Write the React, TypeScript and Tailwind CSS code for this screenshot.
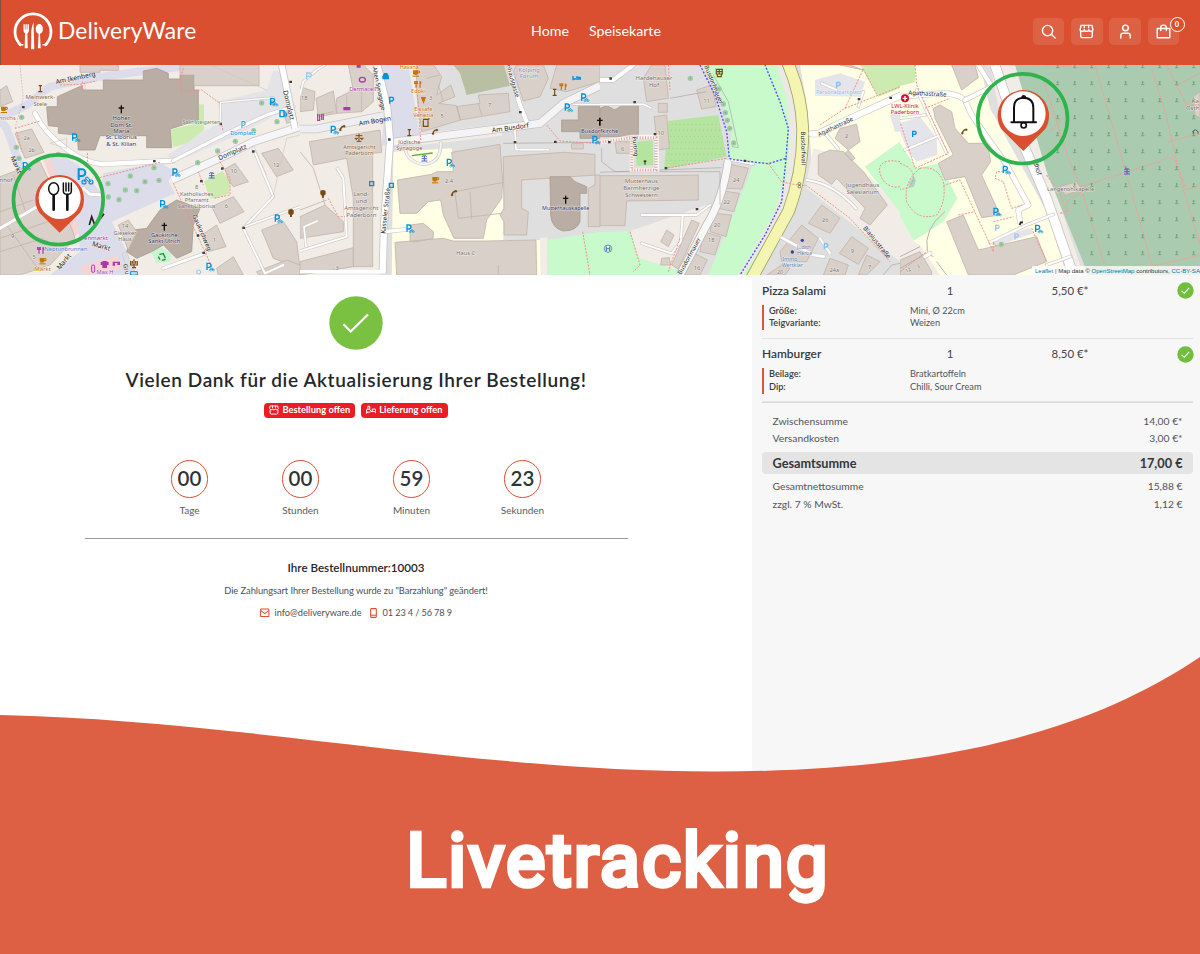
import React from 'react';

type Label = {
  x: number;
  y: number;
  t: string;
  c?: string;
  s?: number;
  r?: number;
  o?: number;
};

const NAVY = '#33335f';
const GREY = '#77706b';
const BLUE = '#0092da';
const ORANGE = '#c77400';
const PURPLE = '#ac39ac';

/* Every map tile is drawn on its own 900 x 630 grid. */
function Tile({ i, children }: { i: number; children: React.ReactNode }) {
  return (
    <svg x={i * 900} y={0} width={900} height={630} viewBox="0 0 900 630">
      {children}
    </svg>
  );
}

function Buildings({ d, dark }: { d: string; dark?: boolean }) {
  return <path d={d} fill={dark ? '#b9ada4' : '#d9d0c9'} stroke={dark ? '#a99c92' : '#c3b5ab'} strokeWidth={2.5} />;
}

function Area({ d, c }: { d: string; c: string }) {
  return <path d={d} fill={c} />;
}

function Road({ d, w = 14, c = '#ffffff', edge = '#cfcac8' }: { d: string; w?: number; c?: string; edge?: string }) {
  return (
    <g fill="none" strokeLinecap="round" strokeLinejoin="round">
      <path d={d} stroke={edge} strokeWidth={w + 4} />
      <path d={d} stroke={c} strokeWidth={w} />
    </g>
  );
}

function Foot({ d, c = '#f0908a', w = 3 }: { d: string; c?: string; w?: number }) {
  return <path d={d} fill="none" stroke={c} strokeWidth={w} strokeDasharray="6 4" />;
}

function Trees({ pts }: { pts: number[][] }) {
  return (
    <g fill="#9fcaa5">
      {pts.map(([x, y]) => (
        <g key={`${x}-${y}`}>
          <circle cx={x} cy={y} r={8} />
          <circle cx={x} cy={y} r={2.5} fill="#7fae86" />
        </g>
      ))}
    </g>
  );
}

function Gates({ pts }: { pts: number[][] }) {
  return (
    <g fill="#3f3f3f">
      {pts.map(([x, y]) => (
        <rect key={`${x}-${y}`} x={x - 4} y={y - 4} width={8} height={7} rx={1} />
      ))}
    </g>
  );
}

function Labels({ items }: { items: Label[] }) {
  return (
    <g fontFamily="'Noto Sans', 'Open Sans', sans-serif" textAnchor="middle">
      {items.map((l, i) => (
        <text
          key={i}
          x={l.x}
          y={l.y}
          fontSize={l.s ?? 20}
          fill={l.c ?? '#222222'}
          opacity={l.o ?? 1}
          stroke="#ffffff"
          strokeOpacity={0.55}
          strokeWidth={3}
          paintOrder="stroke"
          transform={l.r ? `rotate(${l.r} ${l.x} ${l.y})` : undefined}
        >
          {l.t}
        </text>
      ))}
    </g>
  );
}

function Cross({ x, y }: { x: number; y: number }) {
  return <path d={`M${x} ${y - 12}V${y + 12}M${x - 8} ${y - 4}H${x + 8}`} stroke="#111" strokeWidth={4} fill="none" />;
}

function BikeParking({ x, y, k = 1, o = 1 }: { x: number; y: number; k?: number; o?: number }) {
  return (
    <g transform={`translate(${x} ${y}) scale(${k})`} stroke={BLUE} fill="none" opacity={o}>
      <path d="M-8 10V-10H-2A5.500 5.500 0 0 1 -2 2H-8" strokeWidth={4} />
      <circle cx={2} cy={10} r={3} strokeWidth={1.800} />
      <circle cx={11} cy={10} r={3} strokeWidth={1.800} />
      <path d="M2 10L5 4H8L11 10M4 5L8 10" strokeWidth={1.800} />
    </g>
  );
}

function Cup({ x, y }: { x: number; y: number }) {
  return (
    <g fill={ORANGE}>
      <path d={`M${x - 9} ${y - 9}H${x + 6}V${y}Q${x + 5} ${y + 5} ${x - 1} ${y + 5}Q${x - 9} ${y + 5} ${x - 9} ${y}Z`} />
      <path d={`M${x + 5} ${y - 7}H${x + 10}V${y - 1}H${x + 5}`} fill="none" stroke={ORANGE} strokeWidth={3} />
      <rect x={x - 10} y={y + 7} width={19} height={3} />
    </g>
  );
}

function Cutlery({ x, y, c = ORANGE }: { x: number; y: number; c?: string }) {
  return (
    <path
      d={`M${x - 6} ${y + 10}V${y - 10}M${x - 10} ${y - 10}V${y - 3}H${x - 2}V${y - 10}M${x + 6} ${y + 10}V${y - 9}M${x + 8} ${y - 9}V${y}`}
      stroke={c}
      strokeWidth={3.500}
      fill="none"
    />
  );
}

function Phone({ x, y }: { x: number; y: number }) {
  return (
    <g fill="#7b4a12" stroke="#7b4a12">
      <path d={`M${x - 6} ${y + 7}Q${x - 5} ${y - 4} ${x + 6} ${y - 6}`} fill="none" strokeWidth={4} />
      <circle cx={x - 6} cy={y + 6} r={3} />
      <circle cx={x + 6} cy={y - 5} r={3} />
    </g>
  );
}

function Fountain({ x, y }: { x: number; y: number }) {
  return (
    <path
      d={`M${x - 9} ${y + 9}H${x + 9}M${x - 8} ${y + 2}H${x + 8}M${x} ${y + 9}V${y - 8}M${x - 7} ${y - 3}Q${x - 5} ${y - 10} ${x} ${y - 5}Q${x + 5} ${y - 10} ${x + 7} ${y - 3}`}
      stroke="#4a5fd0"
      strokeWidth={3}
      fill="none"
    />
  );
}

function Statue({ x, y }: { x: number; y: number }) {
  return <path d={`M${x} ${y + 9}V${y - 9}M${x - 6} ${y + 9}H${x + 6}M${x - 5} ${y - 9}H${x + 5}`} stroke="#7b4a12" strokeWidth={3.500} fill="none" />;
}

const tileOneTrees = [
  [65, 157], [49, 247], [57, 280], [175, 268], [785, 114], [816, 114], [831, 170], [761, 197], [706, 229],
  [653, 258], [593, 293], [462, 308], [477, 346], [435, 350], [391, 333], [376, 375], [410, 377], [357, 404],
  [325, 396], [324, 356],
];

function TileOne() {
  return (
    <Tile i={0}>
      <rect width={900} height={630} fill="#f1ece6" />
      <Area c="#e3e3e8" d="M600 205L660 175L655 110L800 75L820 18L850 20L870 130L700 215L530 290L500 272L600 205Z" />
      <Area c="#dcdcea" d="M130 280L170 262L235 300L300 380L310 325L480 292L525 320L505 348L525 385L335 470L380 560V630H150L240 560L235 490L150 330Z" />
      <path d="M0 160L80 120L150 65L270 40L430 18L560 4" stroke="#dcdcea" strokeWidth={24} fill="none" />
      <path d="M0 165L20 190L70 330" stroke="#dcdcea" strokeWidth={24} fill="none" />
      <Area c="#cdebb0" d="M597 118H612V195L560 235L520 247L508 195L590 175Z" />
      <Area c="#cdebb0" d="M612 348L668 318L690 350L688 385L645 400L628 398Z" />
      <Area c="#c8f5d0" d="M453 560L480 545L515 565L510 590L470 595Z" />
      <Area c="#f5d5d3" d="M130 285L150 275L240 500L220 520ZM60 520L90 510L95 560L60 555ZM240 605L350 570L365 610L250 630Z" />
      <Buildings dark d="M140 125H172V95L245 62L250 75H310V45H430V18L470 10L505 25V42H540V30H582V75H595V165L510 192L515 248H440V212H300L285 255H235L232 210L175 205V185L145 182Z" />
      <Buildings dark d="M380 560L400 495L440 490L480 435L530 405L600 430L580 480L575 560L530 580L490 540L455 560L410 580Z" />
      <Buildings d="M555 0H777V62H582V30H540V0ZM240 0H355V16H300V22H240ZM0 75L20 62L38 110L0 125ZM45 205L95 192L132 262L75 280ZM675 312L705 295L745 350L700 365L685 345ZM785 265L835 250L880 315L830 335ZM635 425L700 395L732 440L660 475ZM605 510L650 480L678 545L625 560ZM785 495L850 470L890 530L900 610L820 580ZM650 610L700 575L730 630H655Z" />
      <Buildings d="M0 335L120 290L215 490L225 520L150 600L60 630H0ZM355 480L385 465L410 500L385 555ZM850 140L880 130L890 165L860 175ZM770 620L860 585L900 600V630H775Z" />
      <path d="M0 440L100 405M0 520L200 450M0 560L130 520M40 330L80 450M20 480L120 620" stroke="#c3b5ab" strokeWidth={2.500} fill="none" />
      <Road d="M105 145C135 210 235 300 320 297L520 287" w={13} />
      <Road d="M0 490L120 420" w={8} />
      <Road d="M520 287L690 200L800 150L880 125" w={9} />
      <path d="M515 345L690 265L760 230L900 185" stroke="#c9c5c4" strokeWidth={26} fill="none" />
      <path d="M515 345L690 265L760 230L900 185" stroke="#f6f6f8" strokeWidth={21} fill="none" />
      <path d="M845 0L860 70L885 190" stroke="#c9c5c4" strokeWidth={22} fill="none" />
      <path d="M845 0L860 70L885 190" stroke="#ffffff" strokeWidth={17} fill="none" />
      <Road d="M660 178L662 112L820 98" w={4} />
      <Road d="M760 250L820 395L730 490L795 625L850 600" w={6} />
      <Road d="M735 485L900 425" w={5} />
      <Road d="M490 610L615 565" w={8} />
      <Road d="M375 570L400 630" w={14} c="#dcdcea" />
      <Road d="M250 370L270 388L305 390" w={9} />
      <path d="M200 220V250L150 235ZM630 0L800 75M765 255L800 330M900 210L860 220L820 390" stroke="#cfc9c4" strokeWidth={2} fill="none" />
      <Foot d="M180 60L240 58L290 48M247 50V78M45 190L120 168M50 200L65 260M263 290L262 260M290 340L480 292M550 10L540 45L545 80L605 75L660 115M665 180L670 200M595 320L610 360M520 355L640 615M660 290L690 340L690 390L640 400" />
      <path d="M60 0L70 100L45 190M255 50V75" stroke="#d6a8a4" strokeWidth={2} strokeDasharray="5 4" fill="none" />
      <Trees pts={tileOneTrees} />
      <Gates pts={[[70, 127], [463, 289], [662, 177], [872, 51], [667, 311], [604, 349], [760, 260], [731, 489], [594, 512], [611, 564]]} />
      <Cross x={364} y={133} />
      <Cross x={493} y={485} />
      <BikeParking x={226} y={217} />
      <BikeParking x={78} y={303} />
      <BikeParking x={820} y={110} />
      <BikeParking x={527} y={322} />
      <BikeParking x={490} y={417} />
      <BikeParking x={834} y={460} />
      <BikeParking x={629} y={605} />
      <Cup x={12} y={134} />
      <Cup x={128} y={588} />
      <Statue x={121} y={71} />
      <Fountain x={635} y={330} />
      <Cutlery x={123} y={556} c={PURPLE} />
      <path d="M302 592L310 588H318L326 592V600H321V609H307V600H302Z" fill={PURPLE} />
      <path d="M338 590H360V600H352V594H345V602H338Z" fill={PURPLE} />
      <rect x={275} y={600} width={9} height={22} rx={4} fill="none" stroke={PURPLE} strokeWidth={3} />
      <path d="M392 588V600H412V588M397 588V596M407 588V596M402 583V608M396 608H408" stroke="#7b4a12" strokeWidth={3.500} fill="none" />
      <path d="M392 620H412V630H392Z" fill="none" stroke={BLUE} strokeWidth={3} />
      <path d="M478 568L490 566L496 580M475 575L480 584M486 586L497 583" stroke="#1f8a35" strokeWidth={4} fill="none" />
      <path d="M840 137H852V155H840Z" fill="none" stroke={BLUE} strokeWidth={4} />
      <path d="M855 140V153H860V143" fill="none" stroke={BLUE} strokeWidth={3} />
      <path d="M865 436Q873 428 881 436V446L876 450V456H870V450L865 446Z" fill="#7b4a12" />
      <circle cx={596} cy={621} r={6} fill="none" stroke="#8fc3e8" strokeWidth={3} />
    </Tile>
  );
}

function TileTwo() {
  return (
    <Tile i={1}>
      <rect width={900} height={630} fill="#e0dfdf" />
      <Area c="#f1ece6" d="M0 0H220L250 130L265 230L240 630H0Z" />
      <Area c="#ffffe5" d="M280 260L455 250L460 300L610 350V525H725V630H275Z" />
      <Area c="#dcdcea" d="M235 0H325L365 235L245 242L255 130Z" />
      <Area c="#f1ece6" d="M325 0H350L365 100V205L600 178L606 212L365 240Z" />
      <Area c="#b9bfa2" d="M480 25L500 90L630 62L612 0H460Z" />
      <Area c="#c8facc" d="M742 525L900 500V630H745Z" />
      <Area c="#f1ece6" d="M720 518H742V630H722Z" />
      <Buildings d="M145 0H190L220 30V110L185 140L110 145V100L160 75ZM0 65L45 80L40 135L0 140ZM48 100L100 78L110 145L55 155ZM28 230L240 195L245 262L218 265V605H160V400L140 280L40 300Z" />
      <Buildings d="M350 0H400L425 35L410 90L452 60L465 95L415 115L470 122L482 165L365 200L350 80ZM470 125L540 115L535 90L625 85L630 140L480 165Z" />
      <Buildings d="M0 455L75 420L130 470V500L0 520ZM0 590L160 548V605L0 630Z" />
      <Buildings d="M640 20L650 0H730L745 40L720 95L670 108ZM750 70L770 0H900V50L800 80Z" />
      <Buildings d="M455 262L600 238L608 350L605 400L560 465L550 520H462L430 450L422 405L385 410L350 445H300L292 345L395 328L410 320H460Z" />
      <Buildings d="M330 480L370 475L400 500V520L350 530H330ZM285 532L430 520L460 528H560L708 525L710 630H290Z" />
      <Buildings d="M610 275L790 262L885 268V360L865 370V485H900V330H890L665 345V430L685 440L680 510H612V470L600 450L612 430Z" />
      <Buildings d="M815 236H850V252H815Z" />
      <Buildings dark d="M835 125H900V220H840V200H785V165H835ZM750 335H810L825 350L860 365V385L840 385V470Q830 498 790 498Q755 490 752 450Z" />
      <path d="M465 380L475 460L605 445M510 380L515 462M465 380L610 352M595 600V630M0 260L40 310L75 420M80 405L0 435M380 40L420 30M55 150L100 140M140 90V140M185 70V140M535 115L545 150M415 60L430 110" stroke="#c3b5ab" strokeWidth={2.500} fill="none" />
      <path d="M0 192H50L250 152" stroke="#c9c5c4" strokeWidth={26} fill="none" />
      <path d="M0 192H50L250 152" stroke="#eeeef2" strokeWidth={21} fill="none" />
      <path d="M275 232L590 192L720 175L790 115L900 62" stroke="#c9c5c4" strokeWidth={26} fill="none" />
      <path d="M275 232L590 192L720 175L790 115L900 62" stroke="#f4f4f6" strokeWidth={21} fill="none" />
      <path d="M232 0L262 130L270 230L252 480L248 625" stroke="#c9c5c4" strokeWidth={24} fill="none" />
      <path d="M232 0L262 130L270 230L252 480L248 625" stroke="#ffffff" strokeWidth={19} fill="none" />
      <path d="M0 620H250" stroke="#ffffff" strokeWidth={10} fill="none" />
      <Road d="M625 0L660 120L680 170" w={12} />
      <Road d="M316 250Q320 290 370 298Q425 295 422 232" w={6} c="#f4f4f6" />
      <Road d="M255 500L330 492" w={10} />
      <Road d="M645 195L648 254H745" w={5} />
      <Road d="M820 118L900 118" w={4} />
      <Road d="M112 310L130 340L140 515L0 558" w={6} />
      <Road d="M52 468L12 485L18 545" w={5} />
      <Road d="M0 90L10 50L50 15L75 0" w={5} />
      <path d="M610 235L900 232" stroke="#a8a4a2" strokeWidth={2} fill="none" />
      <Foot d="M350 60L362 225M740 180L780 228L900 236M85 400L115 455H135M848 500L870 630" />
      <path d="M335 272L398 264" stroke="#57b02c" strokeWidth={4} />
      <Gates pts={[[268, 224], [661, 142], [645, 232], [766, 231]]} />
      <Cross x={797} y={404} />
      <Cross x={899} y={170} />
      <BikeParking x={102} y={194} />
      <BikeParking x={804} y={127} />
      <BikeParking x={853} y={97} />
      <BikeParking x={450} y={293} />
      <BikeParking x={329} y={490} />
      <BikeParking x={887} y={224} />
      <path d="M20 44V24H30Q38 30 30 35H22" fill="none" stroke="#8fcdf0" strokeWidth={4} />
      <path d="M269 116V97H277Q285 102 277 108H270" fill="none" stroke={BLUE} strokeWidth={4} />
      <path d="M247 43V34L252 24H262L267 34V43Z" fill={BLUE} />
      <path d="M209 350H221V362H209ZM268 355H280V367H268Z" fill="none" stroke={BLUE} strokeWidth={4} />
      <path d="M819 33V46M819 42H841V38L828 36" fill="none" stroke={BLUE} strokeWidth={4} />
      <Cup x={348} y={25} />
      <Cup x={406} y={345} />
      <Cutlery x={354} y={58} />
      <Cutlery x={790} y={65} />
      <path d="M362 96H378L371 117Z" fill={ORANGE} />
      <Phone x={127} y={189} />
      <Phone x={405} y={200} />
      <Phone x={462} y={384} />
      <Statue x={764} y={82} />
      <Statue x={328} y={203} />
      <Fountain x={373} y={279} />
      <ellipse cx={187} cy={44} rx={9} ry={7} fill="none" stroke={PURPLE} strokeWidth={4} />
      <path d="M130 126H151V136H130ZM170 0H182V8H170Z" fill={PURPLE} />
      <path d="M53 146V166H59V148M65 146V165M70 146V165" fill="none" stroke={PURPLE} strokeWidth={3.500} />
      <path d="M177 206V228M167 212H187M165 220Q168 228 173 220ZM181 220Q186 228 190 220ZM170 229H184" fill="none" stroke="#7b4a12" strokeWidth={3} />
      <path d="M369 163H385L388 160M370 166V184H384V166" fill="none" stroke="#7b4a12" strokeWidth={3.500} />
      <path d="M61 379Q69 371 77 379V388L72 392V398H66V392L61 388Z" fill="#7b4a12" />
    </Tile>
  );
}

function TileThree() {
  return (
    <Tile i={2}>
      <rect width={900} height={630} fill="#e0dfdf" />
      <Area c="#c8facc" d="M305 0H545L590 110L600 220L595 330L550 440L440 630H325L460 300L385 285L395 200L360 80Z" />
      <Area c="#ece8e4" d="M530 0H548L592 110L602 220L592 340L540 460L430 630H415L520 450L562 330L570 200L560 100Z" />
      <Area c="#f1ece6" d="M90 498L325 418L330 440L235 610L205 618L115 580Z" />
      <Area c="#c8facc" d="M0 502L90 498L118 580L235 615L230 630H0Z" />
      <Area c="#ffffe5" d="M600 0H900V230L795 305L900 420V500L640 365L632 250L622 130Z" />
      <Area c="#f1ece6" d="M622 340L640 250L750 280L900 420V590L620 370Z" />
      <Area c="#cdebb0" d="M780 0H900V70L835 95Z" />
      <Area c="#c8facc" d="M900 232L795 305L845 370L900 440Z" />
      <Area c="#b5e3a0" d="M205 168L355 150L380 275L192 312Z" />
      <path d="M215 178H360M213 196H365M210 214H368M208 232H370M205 250H375M202 268H378M200 286H340" stroke="#94cf7c" strokeWidth={2.500} strokeDasharray="3 9" />
      <Area c="#e4e4ea" d="M645 45L720 25L795 50L780 95L645 92Z" />
      <Area c="#e4e4ea" d="M870 150L900 135V200H885Z" />
      <Area c="#b5e3a0" d="M105 232L158 225L160 300L110 303Z" />
      <Buildings d="M155 0H195L205 100L140 110L130 40ZM290 75L335 60L348 125L305 132ZM175 115H202V142H175ZM162 155L200 150L208 250L175 255ZM45 230H90V265H50ZM0 332H175L295 330V405L80 408L75 482H0Z" />
      <Buildings dark d="M0 130L20 122L45 135L70 118H115V215H0Z" />
      <Buildings d="M393 298L445 310L425 372L378 370ZM372 378L418 385L402 440L355 430ZM340 445L395 450L378 515L330 500ZM310 500L362 515L345 570L300 560ZM275 560L322 585L300 630H255ZM275 465L298 475L235 612L215 600ZM200 495L222 510L205 545L182 530ZM185 580L208 578L212 600L182 600Z" />
      <Buildings d="M720 190L770 178L780 230L745 255L705 220ZM745 255L765 280L755 288L735 265ZM655 270L690 255L730 260L790 320L862 420L810 480L780 460L795 430L710 340L695 358L655 330Z" />
      <Buildings d="M665 420L720 460L690 505L625 475ZM605 480L655 520L620 590H545L540 560ZM755 515L805 550L775 598L718 565ZM690 580L745 600L735 630H670ZM800 570L840 590L800 630H775ZM545 600L570 610L555 630H500ZM720 0L790 15L750 0Z" />
      <path d="M385 285Q370 400 320 480L240 630" stroke="#bdb9b7" strokeWidth={26} fill="none" />
      <path d="M385 285Q370 400 320 480L240 630" stroke="#f8f8f8" strokeWidth={21} fill="none" />
      <path d="M562 -10Q605 90 608 190Q610 320 565 440L455 640" stroke="#9fa36c" strokeWidth={38} fill="none" />
      <path d="M562 -10Q605 90 608 190Q610 320 565 440L455 640" stroke="#f4f5b0" strokeWidth={33} fill="none" />
      <Road d="M636 206H655L740 165L900 92" w={18} />
      <Road d="M0 45H40L100 0" w={12} />
      <Road d="M0 118H130L152 128" w={5} />
      <Road d="M125 450H290L330 420M248 455L242 530L215 565L125 535" w={6} />
      <Road d="M545 518L640 570L672 575" w={8} />
      <Road d="M620 345Q700 355 768 430" w={6} />
      <Road d="M680 210L715 252" w={7} />
      <Road d="M660 520L690 565M665 55L710 75M790 80L775 125" w={6} />
      <Road d="M395 285L460 297" w={6} />
      <path d="M0 322L365 308M110 320H360V420M210 100L320 80M5 250V290L45 320H110M340 30L385 110L415 248L395 245M900 595L875 600L850 630" stroke="#aaa6a3" strokeWidth={2} fill="none" />
      <path d="M300 0L345 90L380 200L388 280L400 284L505 296L558 280L565 190L540 110L495 0M558 280L545 410L495 510L420 630" fill="none" stroke="#4a4af0" strokeWidth={4} strokeDasharray="6 5" />
      <path d="M0 232L95 215L170 215L172 315H95V225" fill="none" stroke="#ffffff" strokeWidth={12} opacity={0.7} />
      <path d="M0 232L95 218H168V315H95V225" fill="none" stroke="#f0a09c" strokeWidth={9} strokeDasharray="3 5" />
      <Foot d="M195 310L380 280M205 0L210 75M505 296L545 350L580 358L620 362L750 460L870 590M660 180L735 130L900 65M735 130L790 12L832 92M90 500L120 600L100 620M900 290C850 280 830 300 842 330C850 360 880 370 900 365M240 520L205 620" />
      <Trees pts={[[271, 40], [357, 72], [370, 117], [376, 143], [382, 166], [389, 190], [401, 234]]} />
      <Gates pts={[[32, 41], [104, 112], [28, 232], [198, 310], [165, 208], [291, 433], [435, 288], [777, 103], [872, 99]]} />
      <Cross x={0} y={170} />
      <path d="M135 285V299M131 289H139" stroke="#222" strokeWidth={3} fill="none" />
      <circle cx={24} cy={551} r={11} fill="none" stroke="#5a6fb5" strokeWidth={2.500} />
      <path d="M19 545V558M29 545V558M19 551H29" stroke="#5a6fb5" strokeWidth={3} />
      <path d="M349 13H367V27H349ZM352 27V35H364V27M358 13V27M349 20H367" fill="none" stroke="#7b4a12" strokeWidth={3.500} />
      <path d="M710 70V52H717Q725 57 717 62H711M673 553V536H680Q688 541 680 546H674" fill="none" stroke="#7fc3ec" strokeWidth={4} />
      <circle cx={607} cy={526} r={5} fill="#28489c" />
      <circle cx={577} cy={561} r={5} fill="#28489c" />
      <g fill="none" stroke="#555" strokeWidth={2}>
        <circle cx={598} cy={356} r={4} />
        <circle cx={598} cy={365} r={4} />
      </g>
    </Tile>
  );
}

const graves: number[][] = [];
for (let row = 0; row < 12; row++) {
  for (let col = 0; col < 9; col++) {
    const x = 473 + col * 51;
    const y = 3 + row * 51;
    if (x > 375 + y * 0.33) graves.push([x, y]);
  }
}

function TileFour() {
  return (
    <Tile i={3}>
      <rect width={900} height={630} fill="#ffffe5" />
      <Area c="#e0dfdf" d="M240 0H360L565 630H500L440 440L270 130Z" />
      <Area c="#f1ece6" d="M270 0H350L400 180L540 600L565 630H520L400 320L300 150Z" />
      <Area c="#aacbaf" d="M345 0H900V630H565L440 320Z" />
      <Area c="#cdebb0" d="M0 0H45V52L0 62Z" />
      <Area c="#c8facc" d="M0 235L50 310L120 295L172 400L130 470L40 528L0 455Z" />
      <Area c="#f1ece6" d="M0 455L40 528L60 540L120 630H0Z" />
      <Area c="#e4e4ea" d="M0 175L60 155L110 220L112 270L50 290L25 260L0 200ZM275 525L390 488L400 505L285 545Z" />
      <Area c="#a9d7c8" d="M27 355L40 333L48 345L42 365L28 370Z" />
      <Buildings d="M155 0H225L235 38L185 75ZM100 130L120 120L155 140L165 190L205 235L262 235L272 290L245 330L300 450L245 458L195 335L135 345L115 295L160 270L105 160Z" />
      <Buildings d="M140 470L190 450L235 555L410 515L440 590L340 630H205ZM480 365L530 350L545 375L495 390ZM0 585L60 560L95 620V630H0ZM880 95L900 80V160L885 150Z" />
      <Road d="M0 95L130 85Q170 85 195 105L215 150L320 300L385 420L355 435L360 470" w={14} />
      <Road d="M195 105L275 65L235 0" w={12} />
      <path d="M285 0L345 180L440 400L520 630" stroke="#c9c5c4" strokeWidth={32} fill="none" />
      <path d="M285 0L345 180L440 400L520 630" stroke="#ffffff" strokeWidth={27} fill="none" />
      <Road d="M270 532L380 480L460 448M440 600L510 575" w={7} c="#fdfdfd" />
      <Road d="M50 75L140 265M15 255L110 215M0 160L75 150" w={6} />
      <path d="M135 440Q70 490 82 560M0 575L60 545M0 610L80 565L100 575M110 590L140 630" fill="none" stroke="#b8b3ae" strokeWidth={3} />
      <Road d="M75 575L90 565" w={10} />
      <Foot d="M45 0L50 60L95 160L145 265L45 310L0 170M75 130L150 100M0 295Q45 310 40 345Q30 375 0 372M60 310Q10 350 20 410Q50 470 110 450Q140 410 130 350Q110 300 60 310M130 362L180 345L280 560M175 450L225 440M320 320L290 320L285 340L310 350L335 430L365 420M280 470L340 455M280 560V530L290 545M395 490L440 590M0 620L80 560" />
      <path d="M432 50L505 280L545 375L620 620M450 200L490 155M585 0L720 470L755 600M755 15L790 120L850 370L900 540M800 0L830 60L900 25M830 60L860 120H900M545 365L820 275M805 230L900 205M820 275L860 375L900 360M440 330L480 385L500 440L480 445M545 380L500 410L505 440M750 605L900 570M430 0L590 10" fill="none" stroke="#e0a9a0" strokeWidth={4} strokeDasharray="7 3" />
      <g stroke="#6aa377" strokeWidth={2.600} fill="none">
        {graves.map(([x, y]) => (
          <path key={`${x}-${y}`} d={`M${x} ${y - 6}V${y + 4}M${x - 3} ${y - 3}H${x + 3}M${x - 5} ${y + 5}H${x + 5}`} />
        ))}
      </g>
      <Trees pts={[[304, 538]]} />
      <Phone x={193} y={199} />
      <Fountain x={681} y={318} />
      <BikeParking x={318} y={314} />
      <BikeParking x={290} y={440} />
      <BikeParking x={415} y={491} />
      <path d="M38 216V199H45Q52 203 46 208H39" fill="none" stroke={BLUE} strokeWidth={4} />
      <path d="M287 497V481H294Q301 485 294 490H288M345 523V507H352Q359 511 352 516H346" fill="none" stroke="#8fc3e8" strokeWidth={3.500} />
      <circle cx={15} cy={100} r={12} fill="#c8102e" />
      <path d="M15 93V107M8 100H22" stroke="#fff" strokeWidth={4} />
      <path d="M359 480L362 472H369" stroke="#222" strokeWidth={5} fill="none" />
      <path d="M877 200L886 194L894 200V206M880 200V206" fill="none" stroke="#555" strokeWidth={3} />
    </Tile>
  );
}

const mapLabels: Label[] = [
  { x: 228, y: 45, t: 'Am Ikenberg', r: -12 },
  { x: 121, y: 102, t: 'Meinwerk-', c: '#8a6a3c', s: 18 },
  { x: 121, y: 122, t: 'Stele', c: '#8a6a3c', s: 18 },
  { x: 22, y: 164, t: 'nrichs', c: ORANGE, s: 18 },
  { x: 364, y: 166, t: 'Hoher', c: NAVY, s: 18 },
  { x: 364, y: 185, t: 'Dom St.', c: NAVY, s: 18 },
  { x: 364, y: 204, t: 'Maria', c: NAVY, s: 18 },
  { x: 364, y: 223, t: 'St. Liborius', c: NAVY, s: 18 },
  { x: 364, y: 242, t: '& St. Kilian', c: NAVY, s: 18 },
  { x: 604, y: 176, t: 'Sakristeigarten', c: '#668a55', s: 16 },
  { x: 729, y: 189, t: 'P', c: BLUE, s: 26 },
  { x: 729, y: 209, t: 'Domplatz', c: BLUE, s: 17 },
  { x: 700, y: 268, t: 'Domplatz', r: -24 },
  { x: 860, y: 122, t: 'Domplatz', r: 76 },
  { x: 80, y: 224, t: '2a', c: GREY, s: 16 },
  { x: 95, y: 261, t: '2b', c: GREY, s: 16 },
  { x: 42, y: 302, t: 'Markt', r: 66 },
  { x: 18, y: 350, t: 'nhof', c: GREY, s: 18 },
  { x: 701, y: 323, t: '10', c: GREY, s: 17 },
  { x: 829, y: 305, t: '12', c: GREY, s: 17 },
  { x: 590, y: 373, t: '8', c: GREY, s: 17 },
  { x: 590, y: 392, t: 'Katholisches', c: GREY, s: 17 },
  { x: 590, y: 411, t: 'Pfarramt', c: GREY, s: 17 },
  { x: 590, y: 430, t: 'Sankt Liborius', c: GREY, s: 17 },
  { x: 679, y: 430, t: '6', c: GREY, s: 17 },
  { x: 643, y: 530, t: '1', c: GREY, s: 17 },
  { x: 375, y: 490, t: '14', c: GREY, s: 17 },
  { x: 375, y: 509, t: 'Gieseker', c: GREY, s: 17 },
  { x: 375, y: 527, t: 'Haus', c: GREY, s: 17 },
  { x: 493, y: 517, t: 'Gaukirche', c: NAVY, s: 17 },
  { x: 493, y: 535, t: 'Sankt Ulrich', c: NAVY, s: 17 },
  { x: 600, y: 505, t: 'Gaukirchweg', r: 66, s: 19 },
  { x: 38, y: 518, t: '9', c: GREY, s: 17 },
  { x: 102, y: 583, t: '5', c: GREY, s: 17 },
  { x: 288, y: 526, t: 'enmarkt', c: PURPLE, s: 18 },
  { x: 198, y: 558, t: 'Neptunbrunnen', c: '#5b7ad0', s: 17 },
  { x: 302, y: 550, t: 'Markt', r: 16 },
  { x: 197, y: 594, t: 'Markt', r: -50 },
  { x: 128, y: 618, t: 'Markt', c: ORANGE, s: 18 },
  { x: 315, y: 627, t: 'Max H', c: PURPLE, s: 17 },
  { x: 373, y: 614, t: 'Gru', r: 76, s: 18 },

  { x: 1126, y: 174, t: 'Am Bogen', r: -10 },
  { x: 1088, y: 79, t: 'Dermacell', c: PURPLE, s: 17 },
  { x: 913, y: 105, t: '18', c: GREY, s: 17 },
  { x: 1131, y: 72, t: 'Alten Synagoge', r: 78, s: 18 },
  { x: 1078, y: 252, t: 'Amtsgericht', c: '#8a6a3c', s: 17 },
  { x: 1078, y: 270, t: 'Paderborn', c: '#8a6a3c', s: 17 },
  { x: 1084, y: 393, t: 'Land-', c: GREY, s: 18 },
  { x: 1084, y: 414, t: 'und', c: GREY, s: 18 },
  { x: 1084, y: 434, t: 'Amtsgericht', c: GREY, s: 18 },
  { x: 1084, y: 455, t: 'Paderborn', c: GREY, s: 18 },
  { x: 1163, y: 438, t: 'Kasseler Straße', r: -84, s: 19 },
  { x: 1228, y: 13, t: 'Havana', c: ORANGE, s: 16 },
  { x: 1255, y: 85, t: 'Edoki', c: ORANGE, s: 17 },
  { x: 1270, y: 137, t: 'Eiscafe', c: ORANGE, s: 17 },
  { x: 1270, y: 155, t: 'Venezia', c: ORANGE, s: 17 },
  { x: 1292, y: 105, t: '3', c: GREY, s: 17 },
  { x: 1326, y: 159, t: '5', c: GREY, s: 17 },
  { x: 1469, y: 127, t: '7', c: GREY, s: 17 },
  { x: 1228, y: 236, t: 'Jüdische', c: '#8a6a3c', s: 17 },
  { x: 1228, y: 255, t: 'Synagoge', c: '#8a6a3c', s: 17 },
  { x: 1347, y: 355, t: '2.4', c: GREY, s: 17 },
  { x: 1532, y: 195, t: 'Am Busdorf', r: -8 },
  { x: 1533, y: 50, t: 'nhausgasse', r: 74, s: 18 },
  { x: 1587, y: 21, t: 'Kolping', c: '#7b93bd', s: 18 },
  { x: 1587, y: 40, t: 'Forum', c: '#7b93bd', s: 18 },
  { x: 1697, y: 435, t: 'Mutterhauskapelle', c: NAVY, s: 16 },
  { x: 1397, y: 570, t: 'Haus C', c: GREY, s: 17 },
  { x: 1011, y: 615, t: '3', c: GREY, s: 17 },
  { x: 1799, y: 204, t: 'Busdorfkirche', c: NAVY, s: 17 },

  { x: 1962, y: 46, t: 'Hardehauser', c: GREY, s: 18 },
  { x: 1962, y: 65, t: 'Hof', c: GREY, s: 18 },
  { x: 2120, y: 114, t: '11', c: GREY, s: 16 },
  { x: 2136, y: 61, t: 'Busdorfmauer', r: 68, s: 18 },
  { x: 1982, y: 210, t: '10', c: GREY, s: 17 },
  { x: 1868, y: 257, t: '6', c: GREY, s: 17 },
  { x: 1900, y: 245, t: 'Purting', r: 84, s: 17 },
  { x: 1924, y: 353, t: 'Mutterhaus', c: GREY, s: 18 },
  { x: 1924, y: 374, t: 'Barmherzige', c: GREY, s: 18 },
  { x: 1924, y: 395, t: 'Schwestern', c: GREY, s: 18 },
  { x: 2209, y: 352, t: '24', c: GREY, s: 17 },
  { x: 2180, y: 417, t: '22', c: GREY, s: 17 },
  { x: 2152, y: 486, t: '20', c: GREY, s: 17 },
  { x: 2134, y: 532, t: '18', c: GREY, s: 17 },
  { x: 2091, y: 616, t: '16', c: GREY, s: 17 },
  { x: 2073, y: 576, t: 'Busdorfmauer', r: -61, s: 18 },
  { x: 2404, y: 250, t: 'Busdorfwall', r: 89, s: 18 },
  { x: 2516, y: 87, t: 'Personalparkplatz', c: '#7fc3ec', s: 16 },
  { x: 2509, y: 190, t: 'Agathastraße', r: -25, s: 18 },
  { x: 2540, y: 220, t: '2', c: GREY, s: 17 },
  { x: 2588, y: 366, t: 'Jugendhaus', c: GREY, s: 18 },
  { x: 2588, y: 387, t: 'Salesianum', c: GREY, s: 18 },
  { x: 2476, y: 470, t: '26', c: GREY, s: 17 },
  { x: 2557, y: 563, t: '9', c: GREY, s: 17 },
  { x: 2609, y: 613, t: '7', c: GREY, s: 17 },
  { x: 2503, y: 620, t: '24a', c: GREY, s: 16 },
  { x: 2412, y: 552, t: 'Judith', c: '#5f7fb5', s: 16 },
  { x: 2414, y: 569, t: 'Herbe', c: '#5f7fb5', s: 16 },
  { x: 2369, y: 587, t: 'Immo', c: '#5f7fb5', s: 16 },
  { x: 2377, y: 605, t: 'Wertklar', c: '#5f7fb5', s: 16 },
  { x: 2340, y: 626, t: '20', c: GREY, s: 15 },
  { x: 2626, y: 536, t: 'Blasiusstraße', r: 51, s: 19 },
  { x: 2715, y: 128, t: 'LWL-Klinik', c: '#c8102e', s: 17 },
  { x: 2715, y: 147, t: 'Paderborn', c: '#c8102e', s: 17 },

  { x: 2782, y: 92, t: 'Agathastraße', r: 3, s: 18 },
  { x: 3106, y: 312, t: 'dhof', r: 72, s: 19 },
  { x: 3212, y: 377, t: 'Langenohlkapelle', c: GREY, s: 17 },
  { x: 3586, y: 115, t: 'Ka', c: GREY, s: 18 },
  { x: 3578, y: 135, t: 'Osth', c: GREY, s: 18 },
  { x: 2727, y: 620, t: '12', c: GREY, s: 15, r: -30 },
  { x: 2757, y: 608, t: '3', c: GREY, s: 15, r: -30 },
];

function RestaurantPin() {
  return (
    <svg className="absolute left-[10px] top-[87px] size-24" viewBox="0 0 288 288" aria-hidden="true">
      <g transform="translate(-30 -261)">
        <g transform="translate(246 330)" fill="none" stroke={BLUE}>
          <path d="M-10 15V-17H0A9 9 0 0 1 0 3H-10" strokeWidth={6} />
          <circle cx={6} cy={21} r={6} strokeWidth={3.500} />
          <circle cx={27} cy={21} r={6} strokeWidth={3.500} />
          <path d="M6 21L12 7H18L27 21M10 9L20 21" strokeWidth={3} />
        </g>
        <path d="M268 480L275 455L285 482L312 446" fill="none" stroke="#222" strokeWidth={5} />
        <circle cx={175} cy={404} r={134.500} fill="none" stroke="#2fb34c" strokeWidth={11} />
        <path d="M179 503L118 443A73 73 0 1 1 240 443Z" fill="#d94f30" />
        <circle cx={179} cy={399} r={63} fill="#fff" />
        <g fill="none" stroke="#111" strokeWidth={4.500} strokeLinecap="round" strokeLinejoin="round">
          <ellipse cx={161} cy={371} rx={15} ry={18} />
          <path d="M161 392V434" strokeWidth={8} />
          <path d="M190 354V378Q190 388 202 388Q214 388 214 378V354M198 354V378M206 354V378" />
          <path d="M202 390V434" strokeWidth={8} />
        </g>
      </g>
    </svg>
  );
}

function BellPin() {
  return (
    <svg className="absolute left-[974px] top-[5px] size-24" viewBox="0 0 288 288" aria-hidden="true">
      <g transform="translate(-222 -15)">
        <circle cx={368} cy={161} r={134.500} fill="none" stroke="#2fb34c" strokeWidth={11} />
        <path d="M370 258L304 192A77 77 0 1 1 436 192Z" fill="#d94f30" />
        <circle cx={370} cy={146} r={67} fill="#fff" />
        <g fill="none" stroke="#111" strokeWidth={6} strokeLinecap="round">
          <path d="M342 170V128Q342 99 371 98Q400 99 400 128V170" />
          <path d="M334 172H408" />
          <circle cx={371} cy={181} r={8} strokeWidth={5} />
          <path d="M367 95Q371 91 375 95" />
        </g>
      </g>
    </svg>
  );
}

function TrackingMap() {
  return (
    <section className="relative h-[210px] w-full shrink-0 overflow-hidden">
      <svg className="block h-[210px] w-[1200px]" viewBox="0 0 3600 630">
        <TileOne />
        <TileTwo />
        <TileThree />
        <TileFour />
        <Labels items={mapLabels} />
      </svg>
      <RestaurantPin />
      <BellPin />
      <p className="absolute right-0 bottom-0 h-[9px] bg-white/75 pl-[3px] font-['Liberation_Sans'] text-[6.100px] leading-[9px] whitespace-nowrap text-[#333]">
        <span className="text-[#0078a8]">Leaflet</span> | Map data © <span className="text-[#0078a8]">OpenStreetMap</span> contributors,{' '}
        <span className="text-[#0078a8]">CC-BY-SA</span>
      </p>
    </section>
  );
}

function Logo() {
  return (
    <div className="flex items-center gap-[5px]">
      <svg className="size-10" viewBox="0 0 40 40" fill="none" stroke="#fff">
        <path d="M8.300 33.500A18 18 0 1 1 31.700 33.500" strokeWidth={2.800} />
        <path d="M5.800 32.800H10.500M29.500 32.800H34.200" strokeWidth={1.600} />
        <path d="M10.500 12.300V18.500Q10.500 20.500 12 21.200L11.700 36.200H14.700L14.400 21.200Q16 20.500 16 18.500V12.300Z" fill="#fff" stroke="none" />
        <path d="M12.300 12V17.500M14.200 12V17.500" stroke="#d94f30" strokeWidth={0.600} />
        <path d="M20.500 10Q17.500 18 18.300 25L17.900 37.300H21.300Z" fill="#fff" stroke="none" />
        <ellipse cx={26.300} cy={17} rx={3.600} ry={5} fill="#fff" stroke="none" />
        <path d="M25.700 20H26.900L27.700 36.200H24.900Z" fill="#fff" stroke="none" />
      </svg>
      <span className="pb-[2px] text-[22.900px] leading-none tracking-[0.080px] text-white">DeliveryWare</span>
    </div>
  );
}

function StoreIcon({ className }: { className: string }) {
  return (
    <svg className={className} viewBox="0 0 16 16" fill="none" stroke="currentColor" strokeWidth={1.500} strokeLinejoin="round" strokeLinecap="round">
      <path d="M2.200 1.500H13.800L14.800 6Q14.800 7.800 12.700 7.800Q10.400 7.800 10.400 6Q10.400 7.800 8 7.800Q5.600 7.800 5.600 6Q5.600 7.800 3.300 7.800Q1.200 7.800 1.200 6Z" />
      <path d="M5.700 1.500V4M10.300 1.500V4M1.800 8.500V12.800Q1.800 14.500 3.500 14.500H12.500Q14.200 14.500 14.200 12.800V8.500" />
    </svg>
  );
}

function ActionButton({ children }: { children: React.ReactNode }) {
  return (
    <button className="relative flex h-[27px] w-[31.500px] items-center justify-center rounded-[5px] bg-white/10 pb-[1px] text-white">{children}</button>
  );
}

function Header() {
  return (
    <header className="grid h-[65px] shrink-0 grid-cols-[1fr_auto_1fr] items-center border-l border-[#80503f] bg-[#d94f30] pr-[21px] pb-[2px] pl-[12px] text-white">
      <Logo />
      <nav className="flex gap-[20px] text-[14.200px] leading-none">
        <a>Home</a>
        <a>Speisekarte</a>
      </nav>
      <div className="flex justify-end gap-[6.700px]">
        <ActionButton>
          <svg className="size-[15px]" viewBox="0 0 16 16" fill="none" stroke="currentColor" strokeWidth={1.500} strokeLinecap="round">
            <circle cx={7} cy={7} r={5.500} />
            <path d="M11 11L15 15" />
          </svg>
        </ActionButton>
        <ActionButton>
          <StoreIcon className="size-[15px]" />
        </ActionButton>
        <ActionButton>
          <svg className="size-[15px]" viewBox="0 0 16 16" fill="none" stroke="currentColor" strokeWidth={1.500} strokeLinecap="round" strokeLinejoin="round">
            <circle cx={8} cy={4.200} r={3} />
            <path d="M3 15V12Q3 9.800 5.300 9.800H10.700Q13 9.800 13 12V15" />
          </svg>
        </ActionButton>
        <ActionButton>
          <svg className="size-[15px]" viewBox="0 0 16 16" fill="none" stroke="currentColor" strokeWidth={1.500} strokeLinejoin="round">
            <path d="M1.300 4.800H14.700V14.700H1.300Z" />
            <path d="M5 7V4Q5 1.200 8 1.200Q11 1.200 11 4V7" strokeLinecap="round" />
          </svg>
          <span className="absolute -top-[1px] -right-[5.500px] flex size-[15px] items-center justify-center rounded-full border-[1.500px] border-white bg-[#d94f30] text-[7.500px] leading-none font-black">
            0
          </span>
        </ActionButton>
      </div>
    </header>
  );
}

function Countdown({ value, label }: { value: string; label: string }) {
  return (
    <div className="flex w-[111px] flex-col items-center">
      <div className="flex size-[37.500px] items-center justify-center rounded-full border-[1.200px] border-[#d94f30] pb-[2px] text-[20.500px] leading-none font-semibold text-[#303437]">
        {value}
      </div>
      <span className="mt-[6px] text-[10px] leading-3 text-[#555b60]">{label}</span>
    </div>
  );
}

function StatusBadge({ children }: { children: React.ReactNode }) {
  return (
    <span className="flex h-[15px] items-center gap-[3px] rounded-[4px] bg-[#ec1c24] px-[5px] text-[9.350px] leading-none font-bold text-white">
      {children}
    </span>
  );
}

function Confirmation() {
  return (
    <main className="flex w-[752px] shrink-0 flex-col items-center bg-white pr-[40px] pt-[21px]">
      <svg className="size-[54px]" viewBox="0 0 54 54">
        <circle cx={27} cy={27} r={26.700} fill="#7ac142" />
        <path d="M14.500 28.300L21.700 35.500L39 18.500" fill="none" stroke="#fff" strokeWidth={2.200} />
      </svg>
      <h1 className="mt-[17px] text-[19px] leading-[26px] font-semibold tracking-[0.630px] whitespace-nowrap text-[#25282a]">
        Vielen Dank für die Aktualisierung Ihrer Bestellung!
      </h1>
      <div className="mt-[9.500px] flex gap-[6px]">
        <StatusBadge>
          <StoreIcon className="size-[10px]" />
          Bestellung offen
        </StatusBadge>
        <StatusBadge>
          <svg className="size-[10px]" viewBox="0 0 16 16" fill="none" stroke="currentColor" strokeWidth={1.600} strokeLinejoin="round">
            <path d="M1 14V7H6L8 10.500H10V6.500H15V13M3 7V2H6V7M1 11.500H7M10 10.500H15" />
          </svg>
          Lieferung offen
        </StatusBadge>
      </div>
      <div className="mt-[42.500px] flex">
        <Countdown value="00" label="Tage" />
        <Countdown value="00" label="Stunden" />
        <Countdown value="59" label="Minuten" />
        <Countdown value="23" label="Sekunden" />
      </div>
      <hr className="mt-[22.500px] w-[543px] border-[#9b9b9b]" />
      <p className="mt-[21px] text-[11.600px] leading-4 font-semibold text-[#25282a]">Ihre Bestellnummer:10003</p>
      <p className="mt-[8px] text-[9.300px] leading-[14px] tracking-[-0.050px] text-[#4a5056]">
        Die Zahlungsart Ihrer Bestellung wurde zu "Barzahlung" geändert!
      </p>
      <div className="mt-[7.500px] flex items-center text-[9.200px] leading-[14px] text-[#4a5056]">
        <svg className="mr-[5px] size-[9.500px] text-[#d94f30]" viewBox="0 0 16 16" fill="none" stroke="currentColor" strokeWidth={1.700} strokeLinejoin="round">
          <rect x={1} y={1.500} width={14} height={13} rx={1} />
          <path d="M1.500 4.500L8 9.500L14.500 4.500" />
        </svg>
        info@deliveryware.de
        <svg className="mr-[6px] ml-[8px] h-[10px] w-[7px] text-[#d94f30]" viewBox="0 0 11 16" fill="none" stroke="currentColor" strokeWidth={1.700}>
          <rect x={1} y={1} width={9} height={14} rx={1} />
          <path d="M1 11.500H10" />
        </svg>
        <span className="tracking-[-0.130px]">01 23 4 / 56 78 9</span>
      </div>
    </main>
  );
}

type Item = { name: string; price: string; options: [string, string][] };

const orderItems: Item[] = [
  { name: 'Pizza Salami', price: '5,50 €*', options: [['Größe:', 'Mini, Ø 22cm'], ['Teigvariante:', 'Weizen']] },
  { name: 'Hamburger', price: '8,50 €*', options: [['Beilage:', 'Bratkartoffeln'], ['Dip:', 'Chilli, Sour Cream']] },
];

function OrderItem({ item }: { item: Item }) {
  return (
    <article className="h-[63.500px] border-b border-[#e2e3e5] pt-[6.500px] last:border-b-0">
      <div className="grid h-[18px] grid-cols-[148px_80px_160px_1fr] items-center text-[11.400px] leading-none text-[#40454a]">
        <span className="text-[11.900px] font-semibold text-[#35393c]">{item.name}</span>
        <span className="text-center">1</span>
        <span className="text-center">{item.price}</span>
        <svg className="-mr-[0.500px] size-[17px] justify-self-end" viewBox="0 0 17 17">
          <circle cx={8.500} cy={8.500} r={8.200} fill="#6fbe3c" />
          <path d="M4.600 8.900L7.200 11.300L12.200 5.900" fill="none" stroke="#fff" strokeWidth={1.100} />
        </svg>
      </div>
      <dl className="mt-[5px] grid grid-cols-[141px_1fr] border-l-2 border-[#d35a41] pl-[5px] text-[9.200px] leading-[12.800px] text-[#505559]">
        {item.options.map(([k, v]) => (
          <React.Fragment key={k}>
            <dt className="font-semibold text-[#383c40]">{k}</dt>
            <dd>{v}</dd>
          </React.Fragment>
        ))}
      </dl>
    </article>
  );
}

function SumRow({ label, value }: { label: string; value: string }) {
  return (
    <div className="flex justify-between px-[10.500px] text-[10.300px] leading-[17.700px] text-[#505559]">
      <span>{label}</span>
      <span>{value}</span>
    </div>
  );
}

function OrderSummary() {
  return (
    <aside className="flex-1 bg-[#f7f7f7] pr-[7px] pl-[10px]">
      {orderItems.map((item) => (
        <OrderItem key={item.name} item={item} />
      ))}
      <section className="border-t-[1.500px] border-[#d9dadc] pt-[9.500px]">
        <SumRow label="Zwischensumme" value="14,00 €*" />
        <SumRow label="Versandkosten" value="3,00 €*" />
        <div className="my-[4px] flex h-[22px] items-center justify-between rounded-[4px] bg-[#e4e4e4] px-[10.500px] text-[12.700px] leading-none font-bold text-[#33373a]">
          <span>Gesamtsumme</span>
          <span>17,00 €</span>
        </div>
        <SumRow label="Gesamtnettosumme" value="15,88 €" />
        <SumRow label="zzgl. 7 % MwSt." value="1,12 €" />
      </section>
    </aside>
  );
}

export default function App() {
  return (
    <div className="relative flex h-[954px] w-[1200px] flex-col overflow-hidden font-['Lato','Open_Sans',sans-serif]">
      <Header />
      <TrackingMap />
      <div className="flex flex-1">
        <Confirmation />
        <OrderSummary />
      </div>
      <div className="absolute inset-x-0 bottom-0 h-[304px]">
        <svg className="block h-[304px] w-full" viewBox="0 0 1200 304">
          <path d="M0 65C240 70 470 121.500 715 121.500C930 121.500 1085 85 1200 7V304H0Z" fill="#d94f30" fillOpacity={0.9} />
        </svg>
        <h2 className="absolute inset-x-0 top-[166px] pl-[36px] text-center font-['Roboto',sans-serif] text-[74px] leading-[90px] font-normal tracking-[2.200px] text-white [-webkit-text-stroke:4.500px_white] [stroke-linejoin:round]">
          Livetracking
        </h2>
      </div>
    </div>
  );
}
